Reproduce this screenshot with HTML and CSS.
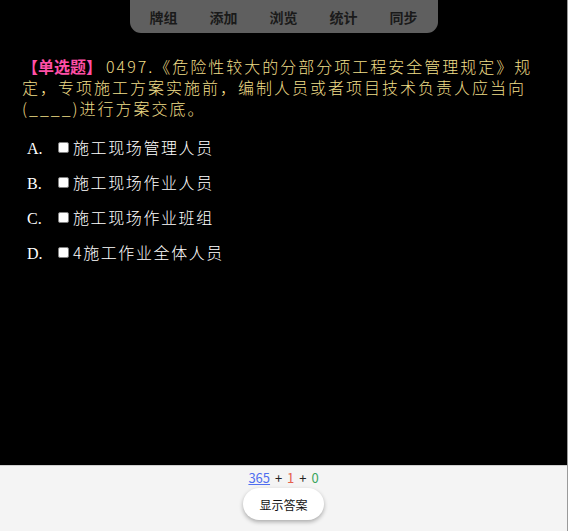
FILE: index.html
```html
<!DOCTYPE html>
<html lang="zh-CN">
<head>
    <meta charset="UTF-8">
    <meta name="viewport" content="width=device-width, initial-scale=1.0">
    <title>Card Review</title>
    <link rel="stylesheet" href="styles.css">
</head>
<body>
    <div class="app">
        <div class="stage">
            <div class="topbar">
                <span class="top-item">牌组</span>
                <span class="top-item">添加</span>
                <span class="top-item">浏览</span>
                <span class="top-item">统计</span>
                <span class="top-item">同步</span>
            </div>

            <div class="question">
                <span class="q-type">【单选题】</span>0497.《危险性较大的分部分项工程安全管理规定》规定，专项施工方案实施前，编制人员或者项目技术负责人应当向(____)进行方案交底。
            </div>

            <div class="options">
                <div class="option"><span class="opt-label">A.</span><span class="check"></span><span class="opt-text">施工现场管理人员</span></div>
                <div class="option"><span class="opt-label">B.</span><span class="check"></span><span class="opt-text">施工现场作业人员</span></div>
                <div class="option"><span class="opt-label">C.</span><span class="check"></span><span class="opt-text">施工现场作业班组</span></div>
                <div class="option"><span class="opt-label">D.</span><span class="check"></span><span class="opt-text">4施工作业全体人员</span></div>
            </div>
        </div>

        <div class="footer">
            <div class="counts">
                <a class="c-new" href="#">365</a> + <span class="c-learn">1</span> + <span class="c-due">0</span>
            </div>
            <button class="answer-btn">显示答案</button>
        </div>
    </div>
</body>
</html>
```

FILE: styles.css
```css
body {
    margin: 0;
    background-color: #ffffff;
    font-family: "Noto Sans CJK SC", "Liberation Sans", sans-serif;
}
.app {
    width: 567px;
    height: 531px;
    display: flex;
    flex-direction: column;
    border-right: 1px solid #9a9a9a;
}
.stage {
    flex: 1;
    background-color: #000000;
    display: flex;
    flex-direction: column;
}
.topbar {
    align-self: center;
    width: 300px;
    height: 33px;
    padding: 0 4px;
    display: flex;
    align-items: center;
    background-color: #5f5f5f;
    border-radius: 0 0 11px 11px;
}
.top-item {
    width: 60px;
    text-align: center;
    font-size: 14px;
    font-weight: bold;
    color: #1a1a1a;
}
.question {
    margin-top: 23px;
    padding: 0 22px;
    font-size: 16px;
    line-height: 21px;
    letter-spacing: 2px;
    color: #f0de88;
    font-weight: 300;
}
.q-type {
    color: #ff4fa6;
    font-weight: bold;
    letter-spacing: 0;
    margin-right: 4px;
}
.options {
    margin-top: 18px;
    padding-left: 27px;
    display: flex;
    flex-direction: column;
    gap: 14px;
}
.option {
    display: flex;
    align-items: baseline;
    height: 21px;
    line-height: 21px;
    color: #ffffff;
}
.opt-label {
    width: 31px;
    font-family: "Liberation Serif", serif;
    font-size: 16px;
}
.check {
    align-self: center;
    width: 9px;
    height: 9px;
    background-color: #ffffff;
    border: 1px solid #808080;
    border-radius: 2px;
    margin-right: 4px;
}
.opt-text {
    font-size: 16px;
    font-weight: 300;
    letter-spacing: 1.6px;
}
.footer {
    height: 65px;
    background-color: #f4f4f4;
    border-top: 1px solid #cfcfcf;
    display: flex;
    flex-direction: column;
    align-items: center;
}
.counts {
    margin-top: 4px;
    font-size: 13px;
    line-height: 16px;
    color: #222222;
    word-spacing: 2px;
}
.c-new {
    color: #4f6ef0;
}
.c-learn {
    color: #e5604c;
}
.c-due {
    color: #3aa45c;
}
.answer-btn {
    margin-top: 2px;
    width: 81px;
    height: 32px;
    border: none;
    border-radius: 16px;
    background-color: #ffffff;
    box-shadow: 0 2px 4px rgba(0, 0, 0, 0.3);
    font-family: "Noto Sans CJK SC", sans-serif;
    font-size: 12px;
    color: #111111;
    cursor: pointer;
}
```
